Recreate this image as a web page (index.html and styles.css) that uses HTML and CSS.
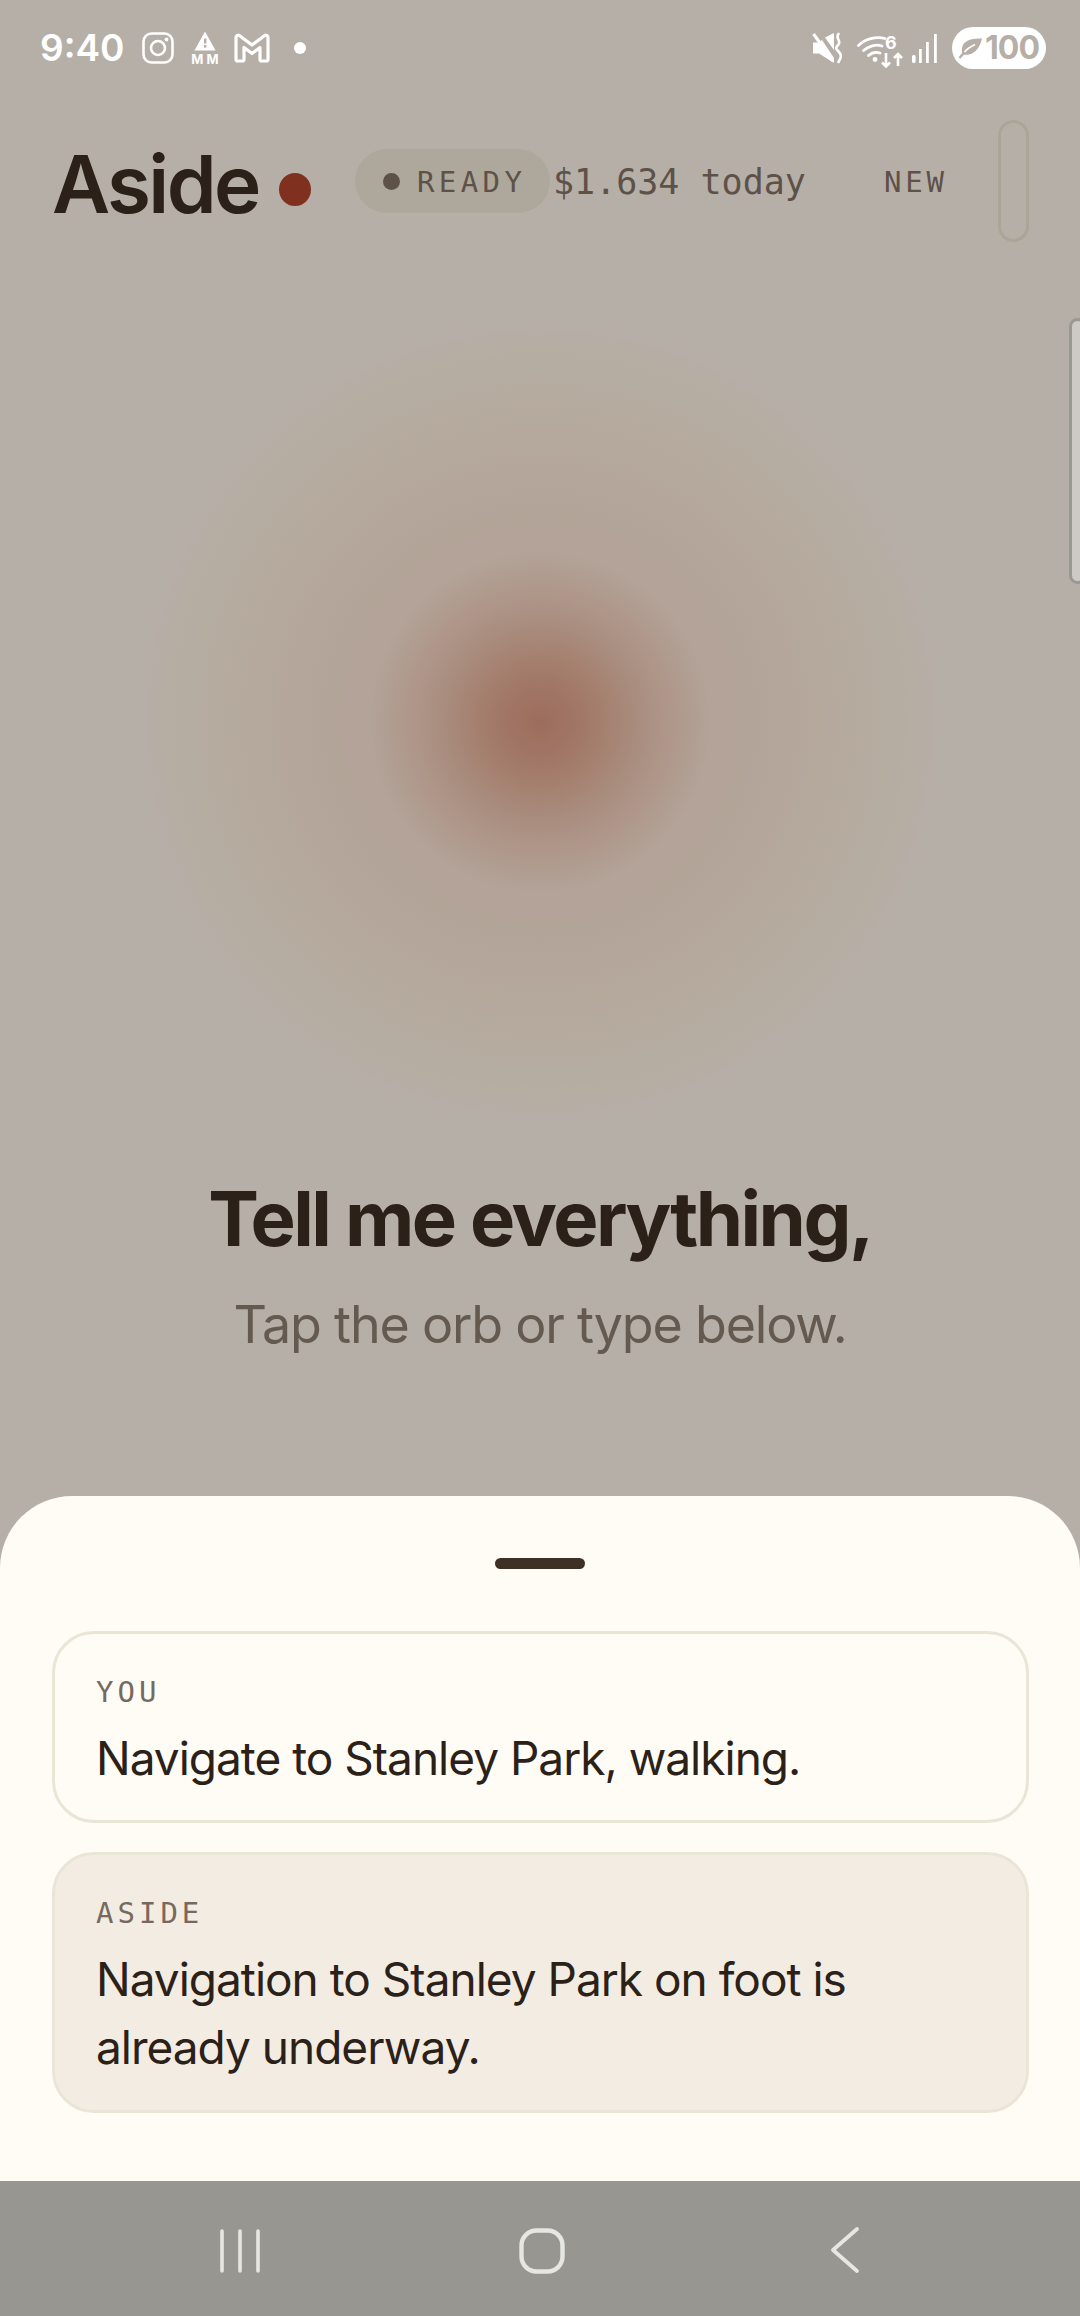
FILE: index.html
```html
<!DOCTYPE html>
<html lang="en">
<head>
<meta charset="utf-8">
<title>Aside</title>
<link rel="stylesheet" href="styles.css">
</head>
<body>
<div class="screen">
  <div class="status">
    <div class="status-left">
      <span class="time">9:40</span>
      <svg class="ic-insta" viewBox="0 0 32 32"><rect x="1.500" y="1.500" width="29" height="29" rx="8" fill="none" stroke="#fff" stroke-width="2.600"/><circle cx="16" cy="16" r="7" fill="none" stroke="#fff" stroke-width="2.600"/><circle cx="24.500" cy="7.500" r="1.900" fill="#fff"/></svg>
      <span class="warn">
        <svg class="ic-warn" viewBox="0 0 22 20"><path d="M11 0.500 21.500 19.500H0.500Z" fill="#fff"/><rect x="10" y="7.500" width="2.400" height="5" fill="#b6afa8"/><rect x="10" y="14" width="2.400" height="2.600" fill="#b6afa8"/></svg>
        <span class="mm">M M</span>
      </span>
      <svg class="ic-gmail" viewBox="0 0 36 30"><path d="M2 4.500C2 2.500 4 1.500 5.600 2.700L18 12 30.400 2.700C32 1.500 34 2.500 34 4.500V26.500C34 27.500 33.500 28 32.500 28H27.500C26.500 28 26 27.500 26 26.500V14.500L18 20.500 10 14.500V26.500C10 27.500 9.500 28 8.500 28H3.500C2.500 28 2 27.500 2 26.500Z" fill="none" stroke="#fff" stroke-width="3.200" stroke-linejoin="round"/></svg>
      <span class="note-dot"></span>
    </div>
    <div class="status-right">
      <svg class="ic-mute" viewBox="0 0 30 32"><path d="M1 10.500H6.500L10 8 22 26 22 31 7 21.500H1Z" fill="#fff"/><path d="M13 5.500 22 1V18Z" fill="#fff"/><path d="M1.500 2 21 29" stroke="#fff" stroke-width="3"/><path d="M26.500 2C23 6 29.500 9 26.500 12.500S23 16 26.500 19.500 29.500 25 26.500 30" fill="none" stroke="#fff" stroke-width="2.600" stroke-linecap="round"/></svg>
      <svg class="ic-wifi" viewBox="0 -6 48 46"><path d="M1.500 10.500C8 4 19 1 28 3.500" fill="none" stroke="#fff" stroke-width="2.800" stroke-linecap="round"/><path d="M6.500 15.500C11.500 11 19 9 25 11" fill="none" stroke="#fff" stroke-width="2.800" stroke-linecap="round"/><path d="M11.500 20.500C15 17.500 19 16.800 23 18" fill="none" stroke="#fff" stroke-width="2.800" stroke-linecap="round"/><circle cx="18" cy="24.500" r="2.400" fill="#fff"/><text x="28" y="14" class="wifi-six">6</text><path d="M29 18V31M25 27.500 29 31.500 33 27.500M41 31V19M37 23 41 19 45 23" fill="none" stroke="#fff" stroke-width="2.600"/></svg>
      <svg class="ic-signal" viewBox="0 0 27 30"><rect x="1" y="22" width="3.600" height="8" rx="1.500" fill="#fff"/><rect x="8" y="16" width="2.800" height="14" fill="#fff"/><rect x="15" y="9" width="2.800" height="21" fill="#fff"/><rect x="23" y="1" width="2.800" height="29" fill="#fff"/></svg>
      <span class="battery">
        <svg class="ic-leaf" viewBox="0 0 25 22"><path d="M24 1.500C13 1 5 4 4 11 3.500 14 4 16 5.500 17.500 14 19 21 14 24 1.500Z" fill="#b6afa8"/><path d="M1.500 21C4 18 5 17 6.500 15" fill="none" stroke="#b6afa8" stroke-width="2.400"/><path d="M6.500 15C9 12 12 10 17 7.500" fill="none" stroke="#fff" stroke-width="1.800"/></svg>
        <span class="batt-num">100</span>
      </span>
    </div>
  </div>

  <header class="topbar">
    <div class="brand"><span class="brand-name">Aside</span><span class="brand-dot"></span></div>
    <div class="pill"><span class="pill-dot"></span><span class="pill-text">READY</span></div>
    <span class="cost">$1.634 today</span>
    <span class="new">NEW</span>
    <span class="capsule"></span>
  </header>

  <div class="side-tab"></div>

  <main class="hero">
    <div class="orb"><div class="orb-core"></div></div>
    <h1 class="title">Tell me everything,</h1>
    <p class="subtitle">Tap the orb or type below.</p>
  </main>

  <section class="sheet">
    <div class="handle"></div>
    <article class="card card-you">
      <div class="label label-you">YOU</div>
      <p class="msg">Navigate to Stanley Park, walking.</p>
    </article>
    <article class="card card-aside">
      <div class="label">ASIDE</div>
      <p class="msg">Navigation to Stanley Park on foot is<br>already underway.</p>
    </article>
  </section>

  <nav class="navbar">
    <svg class="nav-recent" viewBox="0 0 44 44"><path d="M4 2V42M22 2V42M40 2V42" stroke="#e6e6e3" stroke-width="3.600" stroke-linecap="round" fill="none"/></svg>
    <svg class="nav-home" viewBox="0 0 48 48"><rect x="3.500" y="3.500" width="41" height="41" rx="15" fill="none" stroke="#e6e6e3" stroke-width="4.400"/></svg>
    <svg class="nav-back" viewBox="0 0 30 48"><path d="M27 3 3 24 27 45" fill="none" stroke="#e6e6e3" stroke-width="3.800" stroke-linecap="round" stroke-linejoin="round"/></svg>
  </nav>
</div>
</body>
</html>
```
FILE: styles.css
```css
* { box-sizing: border-box; }
html, body { margin: 0; padding: 0; }
body { width: 1080px; height: 2316px; overflow: hidden; font-family: "Inter", "Liberation Sans", sans-serif; background: #b6afa8; }
.screen { position: relative; width: 1080px; height: 2316px; display: flex; flex-direction: column; background: #b6afa8; overflow: hidden; }

.status { height: 96px; padding: 26px 34px 0 40px; display: flex; justify-content: space-between; align-items: flex-start; color: #fff; }
.status-left, .status-right { display: flex; align-items: center; height: 44px; }
.time { font-family: "Inter", sans-serif; font-size: 37px; font-weight: 600; width: 82px; line-height: 44px; }
.ic-insta { width: 32px; height: 32px; margin-left: 20px; }
.warn { display: flex; flex-direction: column; align-items: center; margin-left: 16px; width: 30px; }
.ic-warn { width: 22px; height: 20px; }
.mm { font-size: 13px; font-weight: 700; line-height: 14px; white-space: nowrap; letter-spacing: 0; margin-top: 1px; }
.ic-gmail { width: 36px; height: 30px; margin-left: 14px; }
.note-dot { width: 12px; height: 12px; border-radius: 50%; background: #fff; margin-left: 24px; }
.ic-mute { width: 30px; height: 32px; }
.ic-wifi { width: 48px; height: 46px; margin-left: 15px; margin-top: 8px; }
.wifi-six { font-family: "Inter", sans-serif; font-size: 18px; font-weight: 700; fill: #fff; }
.ic-signal { width: 27px; height: 30px; margin-left: 6px; }
.battery { display: flex; align-items: center; width: 94px; height: 42px; border-radius: 21px; background: #fff; margin-left: 14px; padding-left: 6px; }
.ic-leaf { width: 25px; height: 22px; }
.batt-num { font-family: "Inter", sans-serif; font-size: 32px; font-weight: 700; color: #b6afa8; line-height: 42px; letter-spacing: -1px; margin-left: 2px; }

.topbar { height: 144px; padding: 0 51px 0 52px; margin-top: 13px; display: flex; align-items: center; }
.brand { display: flex; align-items: center; width: 303px; }
.brand-name { font-size: 80px; font-weight: 600; letter-spacing: -2.600px; color: #2b2118; line-height: 90px; margin-top: 5px; }
.brand-dot { width: 32px; height: 33px; border-radius: 50%; background: #7f301e; margin-left: 20px; margin-top: 17px; }
.pill { width: 195px; height: 64px; border-radius: 32px; background: #aea89c; display: flex; align-items: center; padding-left: 28px; }
.pill-dot { width: 17px; height: 17px; border-radius: 50%; background: #5e5148; }
.pill-text, .cost, .new { font-family: "DejaVu Sans Mono", monospace; color: #5e5148; }
.pill-text { font-size: 29px; letter-spacing: 4.400px; margin-left: 17px; margin-top: 2px; }
.cost { font-size: 35px; margin-left: 3px; white-space: nowrap; width: 331px; margin-top: 2px; }
.new { font-size: 29px; letter-spacing: 3.800px; width: 114px; margin-top: 2px; }
.capsule { width: 31px; height: 122px; border: 3px solid #aba597; border-radius: 16px; }

.side-tab { position: absolute; right: -6px; top: 318px; width: 17px; height: 266px; background: #cdc9c4; border: 3px solid #9a9892; border-radius: 14px; }

.hero { flex: 1; display: flex; flex-direction: column; align-items: center; }
.orb { width: 800px; height: 800px; margin-top: 69px; border-radius: 240px; display: flex; align-items: center; justify-content: center; background: radial-gradient(closest-side, #b0a093 0%, #b3a398 45%, #b4a69a 62%, #b5ab9e 80%, #b6ada3 93%, #b6afa8 100%); }
.orb-core { width: 340px; height: 340px; border-radius: 50%; background: radial-gradient(closest-side, #9d6d5b 0%, #a07465 18%, #a5806f 38%, #a98d7f 58%, #af988b 78%, rgba(179,163,151,0) 100%); }
.title { margin: 51px 0 0; font-size: 76px; font-weight: 700; letter-spacing: -2.500px; line-height: 90px; color: #2b2118; }
.subtitle { margin: 29px 0 0; font-size: 52px; font-weight: 400; letter-spacing: -1.200px; line-height: 66px; color: #655a50; }

.sheet { position: absolute; left: 0; right: 0; top: 1496px; height: 685px; background: #fffcf5; border-radius: 72px 72px 0 0; padding: 62px 51px 0 52px; display: flex; flex-direction: column; }
.handle { width: 90px; height: 11px; background: #3d3026; border-radius: 6px; align-self: center; margin-bottom: 62px; margin-left: -1px; }
.card { border: 3px solid #ebe5d8; border-radius: 42px; padding: 43px 41px 0; }
.card-you { height: 192px; }
.card-aside { height: 261px; margin-top: 29px; background: #f3ece2; }
.label { font-family: "DejaVu Sans Mono", monospace; font-size: 29px; line-height: 30px; letter-spacing: 4px; color: #76695e; }
.msg { margin: 17px 0 0; font-size: 46px; font-weight: 400; letter-spacing: -1px; line-height: 68px; color: #2b2118; }

.navbar { position: absolute; left: 0; right: 0; bottom: 0; height: 135px; background: #979691; }
.navbar svg { position: absolute; }
.nav-recent { left: 218px; top: 48px; width: 44px; height: 44px; }
.nav-home { left: 518px; top: 46px; width: 48px; height: 48px; }
.nav-back { left: 830px; top: 45px; width: 30px; height: 48px; }
```
